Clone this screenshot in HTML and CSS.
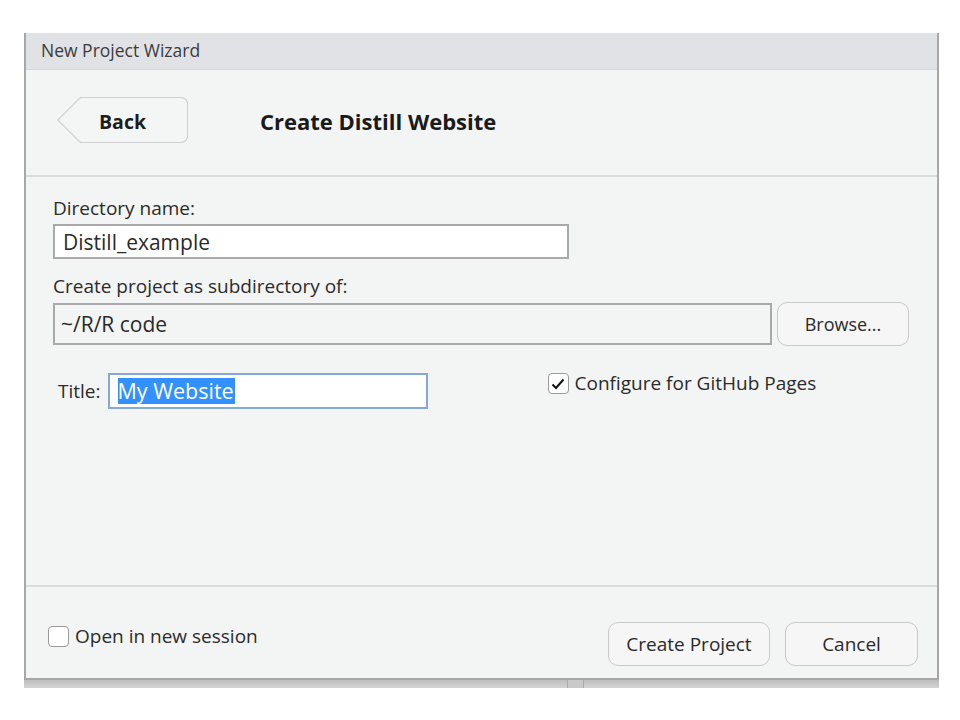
FILE: index.html
```html
<!DOCTYPE html>
<html>
<head>
<meta charset="utf-8">
<link rel="stylesheet" href="styles.css">
</head>
<body>
<div class="window">
  <div class="titlebar">New Project Wizard</div>
  <div class="header">
    <button class="back">
      <svg class="back-shape" width="131" height="46" viewBox="0 0 131 46"><path d="M23.5 0.5 H124 a6.5 6.5 0 0 1 6.5 6.5 V39 a6.5 6.5 0 0 1 -6.5 6.5 H23.5 L0.8 23 Z" fill="#f4f5f5" stroke="#cfcfcf" stroke-width="1.2"/></svg>
      <span class="back-label">Back</span>
    </button>
    <h1 class="heading">Create Distill Website</h1>
  </div>
  <div class="content">
    <label class="label">Directory name:</label>
    <div class="input dir">Distill_example</div>
    <label class="label label2">Create project as subdirectory of:</label>
    <div class="row path-row">
      <div class="input path">~/R/R code</div>
      <button class="btn browse">Browse...</button>
    </div>
    <div class="row title-row">
      <span class="title-label">Title:</span>
      <div class="input title-input"><span class="sel">My Website</span></div>
      <span class="check-wrap gh">
        <span class="checkbox checked"><svg width="14" height="12" viewBox="0 0 14 12"><path d="M1.5 6.5 L5 10 L12.5 1.5" fill="none" stroke="#111" stroke-width="2"/></svg></span>
        <span class="check-text">Configure for GitHub Pages</span>
      </span>
    </div>
  </div>
  <div class="footer">
    <span class="check-wrap">
      <span class="checkbox"></span>
      <span class="check-text">Open in new session</span>
    </span>
    <div class="actions">
      <button class="btn create">Create Project</button>
      <button class="btn cancel">Cancel</button>
    </div>
  </div>
</div>
<div class="shadow"><span class="notch"></span></div>
</body>
</html>
```
FILE: styles.css
```css
html, body {
  margin: 0;
  padding: 0;
  background: #ffffff;
}
body {
  width: 960px;
  height: 720px;
  overflow: hidden;
  font-family: "Open Sans", "Noto Sans", sans-serif;
  color: #2b2b2b;
}
.window {
  margin: 33px 0 0 24px;
  width: 911px;
  height: 645px;
  background: #f3f4f4;
  border-left: 2px solid #a7a7a7;
  border-right: 2px solid #a7a7a7;
  display: flex;
  flex-direction: column;
}
.titlebar {
  flex: none;
  height: 37px;
  background: #e1e2e5;
  border-bottom: 1px solid #d6d6d8;
  box-sizing: border-box;
  padding-left: 15px;
  font-size: 17.5px;
  line-height: 35px;
  color: #3c3c3c;
}
.header {
  flex: none;
  height: 107px;
  box-sizing: border-box;
  border-bottom: 2px solid #dcdcdc;
  display: flex;
  align-items: flex-start;
  padding: 27px 0 0 31px;
}
.back {
  position: relative;
  width: 131px;
  height: 46px;
  border: none;
  background: transparent;
  padding: 3px 0 0 0;
  font-family: inherit;
  cursor: pointer;
  display: flex;
  align-items: center;
  justify-content: center;
}
.back-shape {
  position: absolute;
  left: 0;
  top: 0;
}
.back-label {
  position: relative;
  font-size: 19.5px;
  font-weight: 700;
  color: #1d1d1d;
  margin-left: 0;
}
.heading {
  margin: 0 0 0 72px;
  padding-top: 1px;
  font-size: 22px;
  font-weight: 700;
  color: #1a1a1a;
  line-height: 46px;
}
.content {
  flex: none;
  height: 410px;
  box-sizing: border-box;
  padding: 18px 0 0 27px;
  display: flex;
  flex-direction: column;
  align-items: flex-start;
  border-bottom: 2px solid #dcdcdc;
}
.label {
  font-size: 19px;
  line-height: 26px;
  color: #2b2b2b;
}
.input {
  box-sizing: border-box;
  border: 2px solid #a9a9a9;
  background: #ffffff;
  font-size: 21px;
  color: #2a2a2a;
  padding-left: 8px;
  display: flex;
  align-items: center;
}
.dir {
  width: 516px;
  height: 35px;
  margin-top: 3px;
}
.label2 {
  margin-top: 14px;
}
.row {
  display: flex;
  align-items: center;
}
.path-row {
  margin-top: 3px;
}
.path {
  width: 719px;
  height: 42px;
  background: #f3f4f4;
  padding-left: 6px;
}
.btn {
  box-sizing: border-box;
  border: 1.5px solid #c9c9c9;
  border-radius: 10px;
  background: #f6f6f6;
  font-family: inherit;
  font-size: 19px;
  color: #2a2a2a;
  padding: 0;
}
.browse {
  width: 132px;
  height: 44px;
  margin-left: 5px;
  font-size: 18px;
}
.title-row {
  margin-top: 27px;
  width: 860px;
  align-items: flex-start;
}
.title-label {
  font-size: 19px;
  line-height: 36px;
  color: #2b2b2b;
  margin-left: 5px;
  margin-right: 7px;
}
.title-input {
  width: 320px;
  height: 36px;
  border: 2px solid #85a8d6;
  padding-left: 8px;
}
.sel {
  background: #3390ff;
  color: #ffffff;
  line-height: 26px;
  padding-right: 1px;
  font-size: 21.5px;
}
.gh {
  margin-left: 120px;
  line-height: 21px;
  font-size: 19.5px;
}
.check-wrap {
  display: flex;
  align-items: center;
  font-size: 19px;
  color: #2b2b2b;
}
.checkbox {
  box-sizing: border-box;
  width: 21px;
  height: 21px;
  border: 1.5px solid #9a9a9a;
  border-radius: 4px;
  background: #ffffff;
  display: flex;
  align-items: center;
  justify-content: center;
  margin-right: 6px;
}
.footer {
  flex: 1;
  box-sizing: border-box;
  display: flex;
  align-items: flex-start;
  justify-content: space-between;
  padding: 35px 19px 0 22px;
}
.footer .check-wrap {
  margin-top: 1px;
}
.actions {
  display: flex;
  gap: 15px;
}
.create {
  width: 162px;
  height: 44px;
}
.cancel {
  width: 133px;
  height: 44px;
}
.shadow {
  margin-left: 24px;
  width: 915px;
  height: 8px;
  background: linear-gradient(#bdbdbd, #d4d4d4);
  border-top: 2px solid #a7a7a7;
  position: relative;
}
.notch {
  position: absolute;
  left: 543px;
  top: 0;
  width: 15px;
  height: 8px;
  background: #c9c9c9;
  border-left: 1px solid #a9a9a9;
  border-right: 1px solid #a9a9a9;
}
```
